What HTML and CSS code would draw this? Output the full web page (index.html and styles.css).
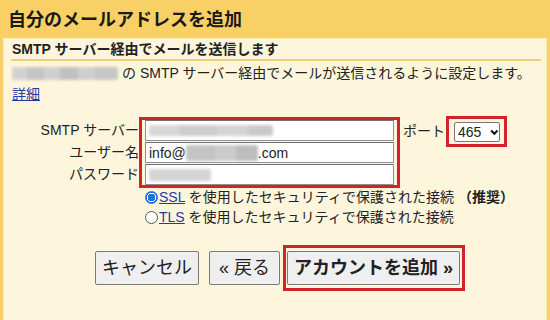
FILE: index.html
```html
<!DOCTYPE html>
<html lang="ja">
<head>
<meta charset="utf-8">
<link rel="stylesheet" href="styles.css">
</head>
<body>
<div class="header">自分のメールアドレスを追加</div>
<div class="panel">
  <div class="sec-title">SMTP サーバー経由でメールを送信します</div>
  <p class="desc"><span class="blur blur-addr"></span>の SMTP サーバー経由でメールが送信されるように設定します。</p>
  <p class="more"><a href="#">詳細</a></p>
  <div class="form">
    <div class="labels">
      <div>SMTP サーバー</div>
      <div>ユーザー名</div>
      <div>パスワード</div>
    </div>
    <div class="hl hl-inputs">
      <div class="field"><span class="blur blur-host"></span></div>
      <div class="field">info@<span class="blur blur-domain"></span>.com</div>
      <div class="field"><span class="blur blur-pass"></span></div>
    </div>
    <div class="port-label">ポート</div>
    <div class="hl hl-port">
      <div class="select"><span>465</span><svg width="9" height="7" viewBox="0 0 9 7"><path d="M1.2 1.5 L4.5 4.8 L7.8 1.5" fill="none" stroke="#111" stroke-width="2.2"/></svg></div>
    </div>
  </div>
  <div class="radios">
    <div class="radio"><span class="dot checked"></span><a href="#">SSL</a> を使用したセキュリティで保護された接続 <b>（推奨）</b></div>
    <div class="radio"><span class="dot"></span><a href="#">TLS</a> を使用したセキュリティで保護された接続</div>
  </div>
  <div class="buttons">
    <button class="btn btn-cancel">キャンセル</button>
    <button class="btn btn-back">« 戻る</button>
    <div class="hl hl-btn"><button class="btn btn-add">アカウントを追加 »</button></div>
  </div>
</div>
</body>
</html>
```
FILE: styles.css
```css
html, body {
  margin: 0;
  padding: 0;
}
body {
  width: 550px;
  height: 320px;
  overflow: hidden;
  background: #f9d065;
  font-family: "Liberation Sans", "Noto Sans CJK JP", sans-serif;
  color: #222;
}
.header {
  height: 38px;
  box-sizing: border-box;
  padding: 1px 0 0 8px;
  font-size: 18px;
  font-weight: bold;
  line-height: 38px;
  color: #1a1a1a;
}
.panel {
  margin: 0 3px;
  height: 282px;
  box-sizing: border-box;
  background: #fef6dc;
  border: 1px solid #fcecb8;
  border-bottom: none;
}
.sec-title {
  margin: 0 5px 0 7px;
  padding-left: 1px;
  font-size: 14px;
  font-weight: bold;
  line-height: 20px;
  border-bottom: 2px solid #ebd07a;
}
.desc {
  margin: 3px 0 0 8px;
  font-size: 14px;
  line-height: 18px;
  white-space: nowrap;
}
.more {
  margin: 3px 0 0 8px;
  font-size: 14px;
  line-height: 18px;
}
a {
  color: #1f3aa8;
  text-decoration: underline;
}
.blur {
  display: inline-block;
  filter: blur(1.6px);
  border-radius: 2px;
}
.blur-addr {
  width: 106px;
  height: 13px;
  margin-right: 4px;
  vertical-align: -2px;
  background: linear-gradient(90deg, #d2d2d2 0 14%, #c4c4c4 14% 30%, #d0d0d0 30% 45%, #c0c0c0 45% 62%, #cfcfcf 62% 78%, #c6c6c6 78% 100%);
}
.blur-host {
  width: 124px;
  height: 11px;
  background: linear-gradient(90deg, #d6d6d6 0 25%, #cdcdcd 25% 55%, #d4d4d4 55% 80%, #cacaca 80% 100%);
}
.blur-domain {
  width: 72px;
  height: 16px;
  background: linear-gradient(90deg, #c4c4c4 0 40%, #cbcbcb 40% 70%, #bdbdbd 70% 100%);
}
.blur-pass {
  width: 62px;
  height: 12px;
  background: #d4d4d4;
}
.form {
  display: flex;
  align-items: flex-start;
  margin-top: 14px;
}
.labels {
  width: 135px;
  padding-top: 3px;
  text-align: right;
  font-size: 14px;
  line-height: 21px;
  white-space: nowrap;
}
.labels div {
  height: 21px;
  margin-bottom: 1px;
}
.hl {
  border: 3px solid #d2232a;
}
.hl-inputs {
  padding: 0 3px 0 3px;
}
.field {
  width: 249px;
  height: 21px;
  box-sizing: border-box;
  margin-bottom: 1px;
  background: #fff;
  border: 1px solid #8f8f8f;
  border-top-color: #707070;
  padding-left: 3px;
  font-size: 14px;
  display: flex;
  align-items: center;
}
.field:last-child {
  margin-bottom: 0;
}
.port-label {
  margin: 3px 1px 0 3px;
  line-height: 22px;
  font-size: 14px;
  white-space: nowrap;
}
.hl-port {
  margin-top: -1px;
  padding: 3px 4px 2px 5px;
}
.select {
  width: 46px;
  height: 20px;
  box-sizing: border-box;
  border: 1px solid #767676;
  border-radius: 2px;
  background: #fff;
  display: flex;
  align-items: center;
  gap: 9px;
  padding-left: 3px;
  font-size: 14px;
}
.radios {
  margin: -1px 0 0 141px;
  font-size: 14px;
}
.radio {
  height: 20px;
  line-height: 20px;
  white-space: nowrap;
}
.radio b {
  font-weight: bold;
}
.dot {
  display: inline-block;
  vertical-align: -2px;
  width: 11px;
  height: 11px;
  border: 1px solid #555;
  border-radius: 50%;
  background: #fff;
  margin-right: 1px;
}
.dot.checked {
  border-color: #1f6fe0;
  background: radial-gradient(circle, #1f6fe0 0 3.6px, #fff 4px 4.6px, #1f6fe0 5px);
}
.buttons {
  display: flex;
  align-items: center;
  margin-top: 18px;
  padding-left: 91px;
}
.btn {
  height: 34px;
  box-sizing: border-box;
  border: 1px solid #7a7a7a;
  border-radius: 2px;
  background: #efefef;
  font-family: "Liberation Sans", "Noto Sans CJK JP", sans-serif;
  font-size: 18px;
  line-height: 30px;
  color: #222;
  padding: 0 7px;
  margin: 0;
  white-space: nowrap;
}
.btn-cancel {
  margin-right: 10px;
  padding: 0 6px;
}
.btn-back {
  margin-right: 3px;
  padding: 0 9px;
}
.hl-btn {
  padding: 3px 2px 3px 1px;
  display: flex;
}
.btn-add {
  font-weight: bold;
  padding: 0 6px;
}
```
